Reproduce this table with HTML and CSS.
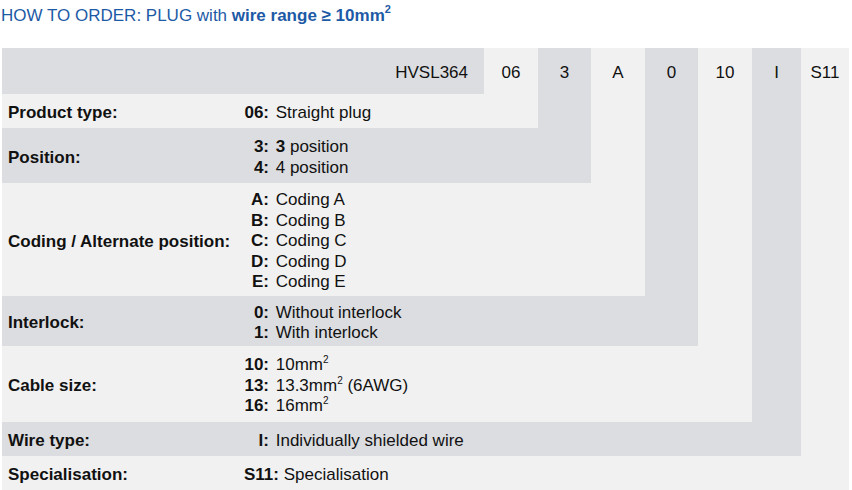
FILE: index.html
```html
<!DOCTYPE html>
<html lang="en">
<head>
<meta charset="utf-8">
<title>How to order: plug</title>
<link rel="stylesheet" href="styles.css">
</head>
<body>
<h2 class="title">HOW TO ORDER: PLUG with <b>wire range ≥ 10mm<sup>2</sup></b></h2>
<div class="order">
  <div class="code code-base dark">HVSL364</div>
  <div class="code c2 light">06</div>
  <div class="code c3 dark">3</div>
  <div class="code c4 light">A</div>
  <div class="code c5 dark">0</div>
  <div class="code c6 light">10</div>
  <div class="code c7 dark">I</div>
  <div class="code c8 light">S11</div>

  <div class="row r2 light">
    <div class="label">Product type:</div>
    <div class="vals"><div><b class="k">06:</b> Straight plug</div></div>
  </div>
  <div class="row r3 dark">
    <div class="label">Position:</div>
    <div class="vals">
      <div><b class="k">3:</b> <b>3</b> position</div>
      <div><b class="k">4:</b> 4 position</div>
    </div>
  </div>
  <div class="row r4 light">
    <div class="label">Coding / Alternate position:</div>
    <div class="vals">
      <div><b class="k">A:</b> Coding A</div>
      <div><b class="k">B:</b> Coding B</div>
      <div><b class="k">C:</b> Coding C</div>
      <div><b class="k">D:</b> Coding D</div>
      <div><b class="k">E:</b> Coding E</div>
    </div>
  </div>
  <div class="row r5 dark">
    <div class="label">Interlock:</div>
    <div class="vals">
      <div><b class="k">0:</b> Without interlock</div>
      <div><b class="k">1:</b> With interlock</div>
    </div>
  </div>
  <div class="row r6 light">
    <div class="label">Cable size:</div>
    <div class="vals">
      <div><b class="k">10:</b> 10mm<sup>2</sup></div>
      <div><b class="k">13:</b> 13.3mm<sup>2</sup> (6AWG)</div>
      <div><b class="k">16:</b> 16mm<sup>2</sup></div>
    </div>
  </div>
  <div class="row r7 dark">
    <div class="label">Wire type:</div>
    <div class="vals"><div><b class="k">I:</b> Individually shielded wire</div></div>
  </div>
  <div class="row r8 light">
    <div class="label">Specialisation:</div>
    <div class="vals"><div><b class="k k-wide">S11:</b> Specialisation</div></div>
  </div>
</div>
</body>
</html>
```
FILE: styles.css
```css
* { box-sizing: border-box; }
html, body { margin: 0; padding: 0; background: #fff; }
body {
  font-family: "Liberation Sans", Arial, sans-serif;
  font-size: 17px;
  color: #111;
}
.title {
  margin: 0 0 22px 0;
  padding: 6px 0 0 1px;
  font-size: 17px;
  line-height: 20px;
  font-weight: normal;
  color: #1d5aa6;
}
.title sup {
  font-size: 11px;
  line-height: 0;
  vertical-align: 8px;
}
.order {
  margin-left: 2px;
  width: 847px;
  display: grid;
  grid-template-columns: 482px 54px 53px 54px 53px 54px 49px 48px;
  grid-template-rows: 46px 34px 55px 113px 50px 76px 34px 34px;
}
.dark { background: #dcdde0; }
.light { background: #f1f1f1; }
.code {
  line-height: 46px;
  padding-top: 2px;
  text-align: center;
  grid-row-start: 1;
}
.code-base { grid-column: 1; text-align: right; padding-right: 16px; }
.c2 { grid-column: 2; grid-row-end: 2; }
.c3 { grid-column: 3; grid-row-end: 3; }
.c4 { grid-column: 4; grid-row-end: 4; }
.c5 { grid-column: 5; grid-row-end: 5; }
.c6 { grid-column: 6; grid-row-end: 6; }
.c7 { grid-column: 7; grid-row-end: 7; }
.c8 { grid-column: 8; grid-row-end: 8; }
.row {
  display: flex;
  align-items: center;
  padding-top: 4px;
  grid-column-start: 1;
}
.r2 { grid-row: 2; grid-column-end: 3; }
.r3 { grid-row: 3; grid-column-end: 4; }
.r4 { grid-row: 4; grid-column-end: 5; }
.r5 { grid-row: 5; grid-column-end: 6; }
.r6 { grid-row: 6; grid-column-end: 7; }
.r7 { grid-row: 7; grid-column-end: 8; }
.r8 { grid-row: 8; grid-column-end: 9; }
.label {
  width: 242px;
  flex: none;
  padding-left: 6px;
  font-weight: bold;
}
.vals { line-height: 20.5px; }
.k {
  display: inline-block;
  min-width: 25px;
  text-align: right;
  margin-right: 2px;
}
.k-wide { margin-right: 0; }
.vals sup {
  font-size: 10px;
  line-height: 0;
  vertical-align: 7px;
}
```
